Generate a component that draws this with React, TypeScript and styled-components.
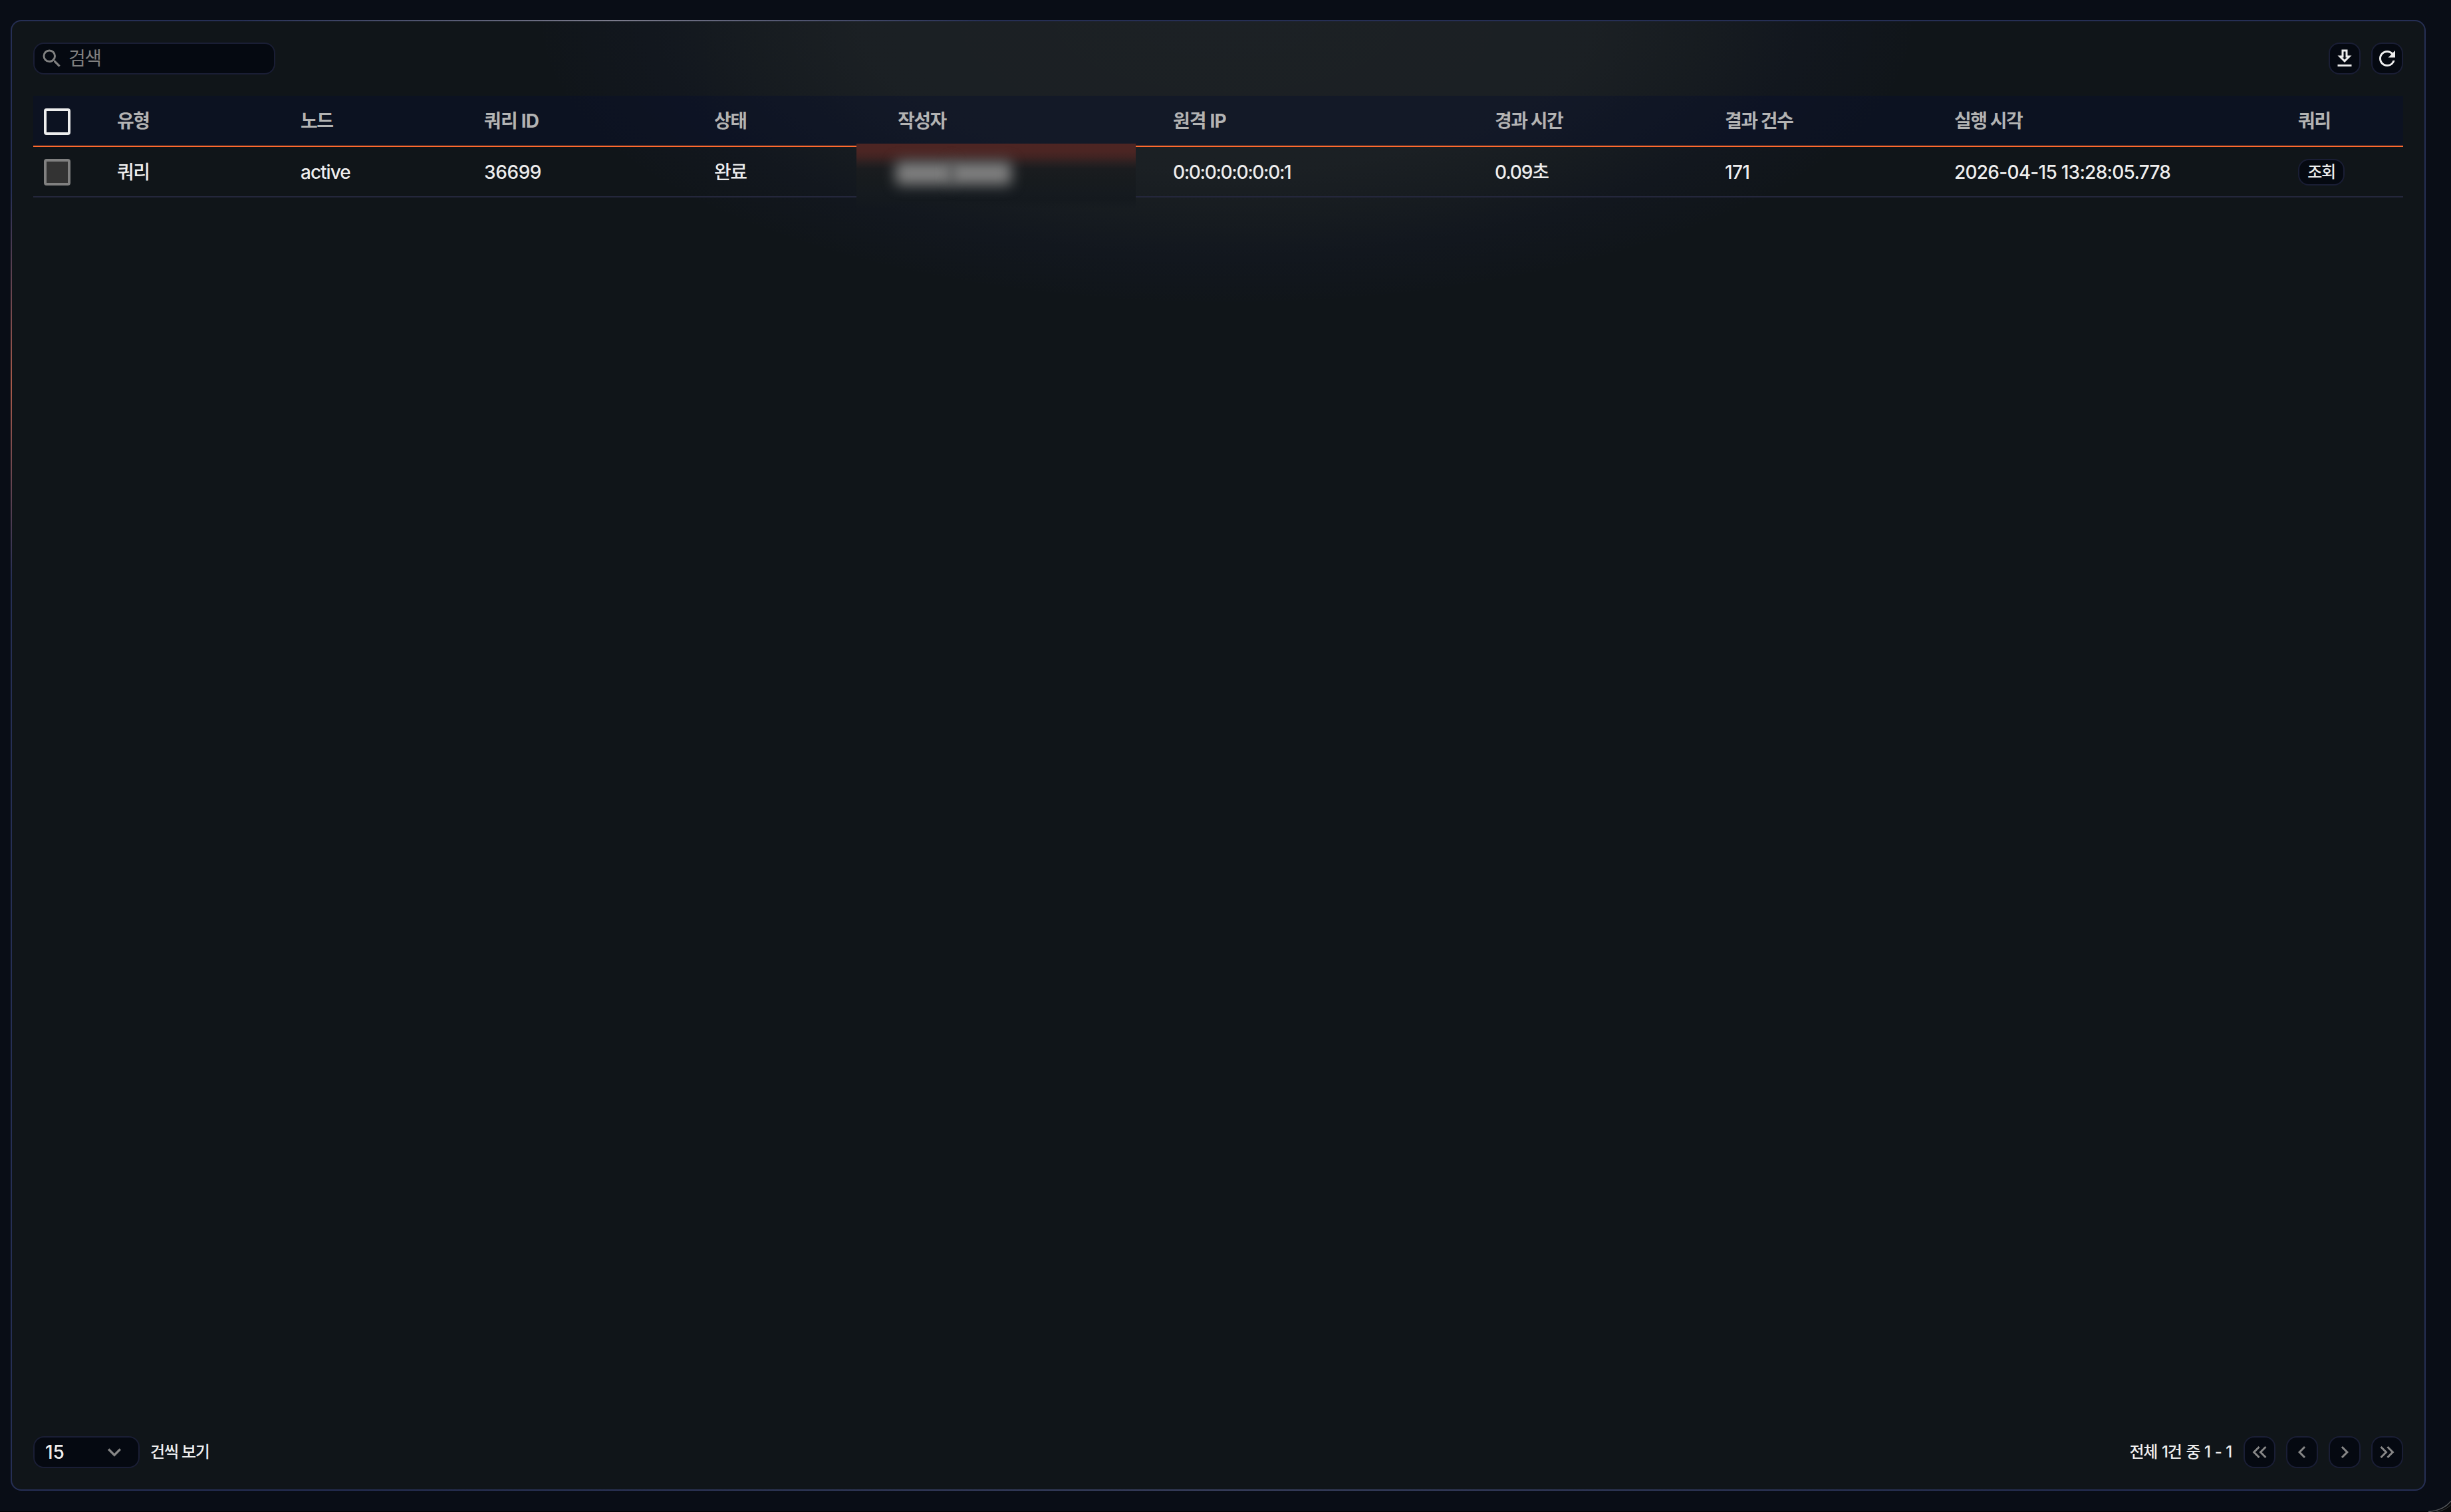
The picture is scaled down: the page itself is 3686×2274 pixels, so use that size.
import React from "react";
import styled, { createGlobalStyle } from "styled-components";
import {
  MdSearch,
  MdRefresh,
  MdExpandMore,
  MdChevronLeft,
  MdChevronRight,
  MdKeyboardDoubleArrowLeft,
  MdKeyboardDoubleArrowRight,
} from "react-icons/md";

const GlobalStyle = createGlobalStyle`
  * {
    box-sizing: border-box;
  }

  body {
    margin: 0;
    overflow: hidden;
    background: #000;
    font-family: Inter, "Noto Sans CJK KR", sans-serif;
    font-size: 28px;
    font-weight: 500;
    color: #ededed;
  }

  button {
    font: inherit;
    color: inherit;
    padding: 0;
  }
`;

const Page = styled.div`
  position: relative;
  display: flex;
  height: 100vh;
  padding: 30px 38px 32px 16px;
  background: #090d16;
  border-bottom: 1px solid #000;
`;

const WindowCorner = styled.svg`
  position: absolute;
  right: 0;
  bottom: -1px;
  width: 34px;
  height: 24px;
`;

const Panel = styled.main`
  flex: 1;
  display: flex;
  flex-direction: column;
  padding: 32px;
  margin-bottom: -1px;
  border: 2px solid transparent;
  border-radius: 16px;
  background:
    radial-gradient(
        ellipse 1000px 410px at 1827px 0,
        rgba(255, 255, 255, 0.052) 0%,
        rgba(250, 252, 255, 0.048) 55%,
        rgba(225, 230, 255, 0.03) 72%,
        rgba(110, 110, 255, 0.022) 86%,
        rgba(90, 90, 255, 0.006) 100%,
        rgba(90, 90, 255, 0) 104%
      )
      padding-box,
    linear-gradient(#101519, #101519) padding-box,
    radial-gradient(ellipse 560px 300px at 904px 0, #7b7b8b 0%, rgba(123, 123, 139, 0) 100%)
      border-box,
    radial-gradient(ellipse 300px 290px at 0 550px, #a85a4a 0%, rgba(168, 90, 74, 0) 100%)
      border-box,
    radial-gradient(ellipse 1300px 200px at 50% 100%, #3c4364 0%, rgba(60, 67, 100, 0) 100%)
      border-box,
    linear-gradient(#262f55, #262f55) border-box;
`;

const Toolbar = styled.div`
  display: flex;
  align-items: center;
  justify-content: space-between;
  margin-bottom: 32px;
`;

const Group = styled.div`
  display: flex;
  align-items: center;
  gap: 16px;
`;

const SearchBox = styled.label`
  display: flex;
  align-items: center;
  gap: 7px;
  width: 364px;
  height: 48px;
  padding: 0 8px;
  border: 2px solid #1a1e35;
  border-radius: 16px;
  background: #050911;
  color: #808080;

  svg {
    flex: none;
  }
`;

const SearchInput = styled.input`
  flex: 1;
  min-width: 0;
  padding: 0;
  border: 0;
  outline: 0;
  background: none;
  color: #ededed;
  font: inherit;
  font-weight: 400;
  letter-spacing: -1.5px;

  &::placeholder {
    color: #808080;
    opacity: 1;
  }
`;

const IconButton = styled.button<{ $muted?: boolean }>`
  display: flex;
  align-items: center;
  justify-content: center;
  width: 48px;
  height: 48px;
  border: 2px solid #1a1e35;
  border-radius: 16px;
  background: #050911;
  color: ${(props) => (props.$muted ? "#868686" : "#ededed")};
`;

const Table = styled.table`
  width: 100%;
  table-layout: fixed;
  border-spacing: 0;
`;

const HeadCell = styled.th<{ $tracking?: number }>`
  height: 77px;
  padding: 0 0 0 24px;
  border-bottom: 2px solid #ff6a2e;
  background: rgba(8, 14, 44, 0.4);
  color: #b3b3b3;
  font-weight: 700;
  line-height: 40px;
  letter-spacing: ${(props) => props.$tracking ?? -1.5}px;
  text-align: left;
  white-space: nowrap;

  &:first-child {
    padding: 3px 0 0 16px;
  }
`;

const Cell = styled.td<{ $tracking?: number }>`
  position: relative;
  height: 76px;
  padding: 2px 0 0 24px;
  border-bottom: 2px solid #24273c;
  line-height: 40px;
  letter-spacing: ${(props) => props.$tracking ?? -1.5}px;
  white-space: nowrap;

  &:first-child {
    padding-left: 16px;
  }
`;

const CheckBox = styled.span<{ $disabled?: boolean }>`
  display: block;
  width: 40px;
  height: 40px;
  border: 4px solid ${(props) => (props.$disabled ? "#808080" : "#ededed")};
  border-radius: 4px;
  background: ${(props) => (props.$disabled ? "#333" : "transparent")};
`;

const ViewButton = styled.button`
  display: block;
  width: 70px;
  height: 40px;
  border: 2px solid #1a1e35;
  border-radius: 16px;
  background: #050911;
  font-size: 24px;
  line-height: 36px;
  letter-spacing: -1.3px;
`;

// masks the author's name
const Redaction = styled.div`
  position: absolute;
  top: -5px;
  left: -38px;
  display: flex;
  align-items: center;
  width: 420px;
  height: 98px;
  padding: 0 0 10px 59px;
  background: linear-gradient(
    #4d2523 0,
    #4b2523 12px,
    #402322 20px,
    #2a2021 29px,
    #1a1c1f 38px,
    #171b1e 55px,
    #151a1f 76px,
    #14191e 84px,
    rgba(20, 25, 30, 0) 98px
  );
`;

const Smudge = styled.span<{ $width: number }>`
  width: ${(props) => props.$width}px;
  height: 35px;
  margin-right: -4px;
  border-radius: 5px;
  background: #808080;
  filter: blur(10px);
`;

const Footer = styled.div`
  display: flex;
  align-items: center;
  justify-content: space-between;
  margin-top: auto;
`;

const PageSize = styled.button`
  display: flex;
  align-items: center;
  justify-content: space-between;
  width: 160px;
  height: 48px;
  padding: 0 16px;
  border: 2px solid #1a1e35;
  border-radius: 16px;
  background: #050911;

  svg {
    color: #868686;
  }
`;

const Label = styled.span`
  font-size: 24px;
  line-height: 36px;
  letter-spacing: -1.2px;
  white-space: nowrap;
`;

const RangeLabel = styled(Label)`
  padding-right: 2px;
  letter-spacing: -1.3px;
  word-spacing: 1.8px;
`;

const columns = [
  { title: "유형", width: 276 },
  { title: "노드", width: 276 },
  { title: "쿼리 ID", width: 346, tracking: -0.8 },
  { title: "상태", width: 276 },
  { title: "작성자", width: 414 },
  { title: "원격 IP", width: 484, tracking: -0.9 },
  { title: "경과 시간", width: 346 },
  { title: "결과 건수", width: 345 },
  { title: "실행 시각", width: 517 },
  { title: "쿼리", width: 182 },
];

const DownloadIcon = () => (
  <svg width="36" height="36" viewBox="0 0 24 24" fill="currentColor">
    <path d="M19 9h-4V3H9v6H5l7 7 7-7zm-8 2V5h2v6h1.17L12 13.17 9.83 11H11zm-6 7h14v2H5z" />
  </svg>
);

export default function App() {
  return (
    <Page>
      <GlobalStyle />
      <Panel>
        <Toolbar>
          <SearchBox>
            <MdSearch size={36} />
            <SearchInput placeholder="검색" />
          </SearchBox>
          <Group>
            <IconButton>
              <DownloadIcon />
            </IconButton>
            <IconButton>
              <MdRefresh size={36} />
            </IconButton>
          </Group>
        </Toolbar>

        <Table>
          <colgroup>
            <col width={102} />
            {columns.map((column, i) => (
              <col key={i} width={column.width} />
            ))}
          </colgroup>
          <thead>
            <tr>
              <HeadCell>
                <CheckBox />
              </HeadCell>
              {columns.map((column, i) => (
                <HeadCell key={i} $tracking={column.tracking}>
                  {column.title}
                </HeadCell>
              ))}
            </tr>
          </thead>
          <tbody>
            <tr>
              <Cell>
                <CheckBox $disabled />
              </Cell>
              <Cell>쿼리</Cell>
              <Cell $tracking={-1}>active</Cell>
              <Cell $tracking={-0.4}>36699</Cell>
              <Cell>완료</Cell>
              <Cell>
                <Redaction>
                  <Smudge $width={86} />
                  <Smudge $width={92} />
                </Redaction>
              </Cell>
              <Cell $tracking={-1.35}>0:0:0:0:0:0:0:1</Cell>
              <Cell $tracking={-1.1}>0.09초</Cell>
              <Cell $tracking={-0.7}>171</Cell>
              <Cell $tracking={-0.75}>2026-04-15 13:28:05.778</Cell>
              <Cell>
                <ViewButton>조회</ViewButton>
              </Cell>
            </tr>
          </tbody>
        </Table>

        <Footer>
          <Group>
            <PageSize>
              15
              <MdExpandMore size={40} />
            </PageSize>
            <Label>건씩 보기</Label>
          </Group>
          <Group>
            <RangeLabel>전체 1건 중 1 - 1</RangeLabel>
            <IconButton $muted>
              <MdKeyboardDoubleArrowLeft size={36} />
            </IconButton>
            <IconButton $muted>
              <MdChevronLeft size={36} />
            </IconButton>
            <IconButton $muted>
              <MdChevronRight size={36} />
            </IconButton>
            <IconButton $muted>
              <MdKeyboardDoubleArrowRight size={36} />
            </IconButton>
          </Group>
        </Footer>
      </Panel>
      <WindowCorner viewBox="0 0 34 24">
        <path d="M0 24C14 23 26 18 34 8V24Z" fill="#08090b" />
        <path d="M0 23.5C14 22.5 26 17.5 34 7.5" fill="none" stroke="#55585c" strokeWidth="1.5" />
        <path d="M12 24C22 22 29 18 34 13" fill="none" stroke="#3a3c3f" strokeWidth="1" />
      </WindowCorner>
    </Page>
  );
}
